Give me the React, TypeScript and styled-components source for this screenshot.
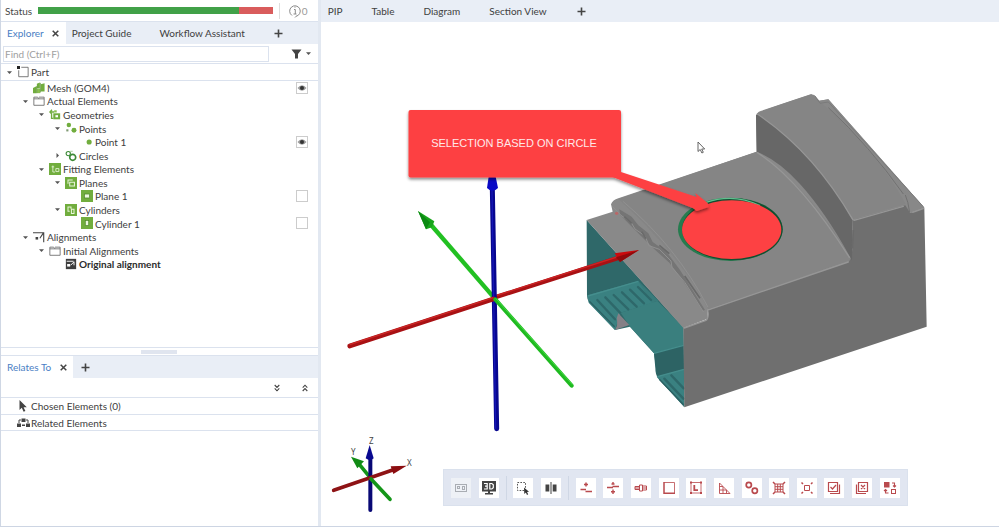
import React from "react";
import styled, { createGlobalStyle } from "styled-components";

const GlobalStyle = createGlobalStyle`
  * { box-sizing: border-box; }
  html, body, #root { height: 100%; }
  body {
    margin: 0;
    background: #ffffff;
    color: #404040;
    font-family: Lato, "Open Sans", sans-serif;
    font-size: 10px;
    line-height: 14px;
  }
  button, input { font: inherit; color: inherit; }
`;

const line = "#dbe2ee";
const strip = "#e9eef6";

const Shell = styled.div`
  display: flex;
  height: 100%;
  min-height: 480px;
  border-bottom: 1px solid #cdd5e3;
`;

const Sidebar = styled.aside`
  flex: 0 0 calc(32% + 1px);
  min-width: 0;
  display: grid;
  grid-template-rows: auto 1fr 34%;
  border-left: 1px solid #cfd7e4;
  border-right: 3px solid #e2e8f1;
`;

const StatusRow = styled.div`
  display: flex;
  align-items: center;
  height: 22px;
  padding: 0 10px 0 4px;
  gap: 6px;
  border-bottom: 1px solid ${line};
`;

const StatusLabel = styled.span`
  color: #484848;
`;

const StatusBar = styled.div`
  flex: 1;
  display: flex;
  height: 7px;
`;

const StatusPart = styled.span<{ $share: number; $tone: string }>`
  flex: ${(p) => p.$share};
  background: ${(p) => p.$tone};
`;

const Messages = styled.span`
  display: flex;
  align-items: center;
  height: 16px;
  padding-left: 8px;
  border-left: 1px solid #dedede;
  color: #9a9a9a;
`;

const Section = styled.section`
  display: flex;
  flex-direction: column;
  min-height: 0;
`;

const TabStrip = styled.div`
  display: flex;
  align-items: stretch;
  height: 22px;
  flex: none;
  background: ${strip};
`;

const Tab = styled.div<{ $active?: boolean; $wide?: boolean }>`
  display: flex;
  align-items: center;
  gap: 6px;
  padding: 0 ${(p) => (p.$wide ? 22 : 4)}px 0 6px;
  background: ${(p) => (p.$active ? "#ffffff" : "transparent")};
`;

const TabButton = styled.button<{ $active?: boolean }>`
  padding: 0;
  border: 0;
  background: none;
  white-space: nowrap;
  color: ${(p) => (p.$active ? "#4a80c4" : "#404040")};
`;

const IconButton = styled.button`
  display: grid;
  place-items: center;
  padding: 0;
  min-width: 12px;
  height: 100%;
  border: 0;
  background: none;
  color: #444444;
`;

const FindRow = styled.div`
  display: flex;
  align-items: center;
  flex: none;
  height: 20px;
  padding: 0 3px 0 2px;
  border-bottom: 1px solid ${line};
`;

const FindInput = styled.input`
  flex: 1;
  min-width: 0;
  height: 16px;
  margin-right: 22px;
  padding: 0 1px;
  border: 1px solid ${line};
  background: #ffffff;
  outline: 0;
  &::placeholder { color: #a0a0a0; opacity: 1; }
`;

const RootRow = styled.div`
  flex: none;
  display: grid;
  height: 17px;
  border-bottom: 1px solid ${line};
`;

const TreeList = styled.div`
  display: grid;
  grid-auto-rows: 1fr;
  height: 190px;
`;

const Row = styled.div<{ $level: number; $bold?: boolean }>`
  display: flex;
  align-items: center;
  min-height: 0;
  padding: 0 10px 0 ${(p) => p.$level * 16 + 2}px;
  font-weight: ${(p) => (p.$bold ? 700 : 400)};
  color: ${(p) => (p.$bold ? "#2c2c2c" : "#404040")};
`;

const Chevron = styled.span`
  display: grid;
  place-items: center;
  flex: none;
  width: 13px;
`;

const RowIcon = styled.span`
  display: grid;
  place-items: center;
  flex: none;
  width: 14px;
`;

const RowText = styled.span`
  flex: 1;
  padding-left: 1px;
  white-space: nowrap;
`;

const Toggle = styled.label`
  display: grid;
  place-items: center;
  width: 12px;
  height: 12px;
  > * { grid-area: 1 / 1; }
`;

const ToggleBox = styled.input`
  appearance: none;
  width: 12px;
  height: 12px;
  margin: 0;
  border: 1px solid #cccccc;
  background: #ffffff;
`;

const Grip = styled.div`
  display: grid;
  place-items: center;
  flex: none;
  height: 9px;
  border: solid ${line};
  border-width: 1px 0;
  &::before {
    content: "";
    width: 36px;
    height: 4px;
    background: #e0e5ef;
  }
`;

const FoldRow = styled.div`
  display: flex;
  justify-content: flex-end;
  gap: 16px;
  flex: none;
  height: 20px;
  padding-right: 7px;
  border-bottom: 1px solid ${line};
`;

const RelationRow = styled.div<{ $tall?: boolean }>`
  display: flex;
  align-items: center;
  flex: none;
  height: ${(p) => (p.$tall ? 17 : 16)}px;
  padding-left: 15px;
  border-bottom: 1px solid ${line};
`;

const Main = styled.main`
  flex: 1;
  min-width: 0;
  display: flex;
  flex-direction: column;
`;

const ViewTabs = styled(TabStrip)`
  gap: 29px;
  padding-left: 7px;
`;

const Viewport = styled.div`
  position: relative;
  flex: 1;
  min-height: 0;
`;

const Scene = styled.svg`
  display: block;
  width: 100%;
  height: 100%;
`;

const Toolbar = styled.div`
  position: absolute;
  left: 18%;
  bottom: 20px;
  display: flex;
  align-items: center;
  justify-content: space-between;
  width: 465px;
  height: 37px;
  padding: 0 7px;
  background: #e1e6f1;
  border: 1px solid #dae1ed;
`;

const ToolGroup = styled.div<{ $width: number }>`
  display: flex;
  justify-content: space-between;
  width: ${(p) => p.$width}px;
`;

const ToolSeparator = styled.span`
  width: 1px;
  height: 24px;
  background: #cfd7e5;
`;

const Tool = styled.button<{ $tone: string }>`
  width: 20px;
  height: 20px;
  padding: 0;
  border: 0;
  background: ${(p) => (p.disabled ? "#eef1f6" : "#ffffff")};
  color: ${(p) => p.$tone};
  svg { display: block; }
`;

const Cross = () => (
  <svg width="7" height="7" viewBox="0 0 7 7" stroke="currentColor" strokeWidth="1.5">
    <path d="M.7.7l5.6 5.6M6.3.7L.7 6.3" />
  </svg>
);
const Plus = () => (
  <svg width="9" height="9" viewBox="0 0 9 9" stroke="currentColor" strokeWidth="1.6">
    <path d="M4.5.5v8M.5 4.5h8" />
  </svg>
);
const Fold = ({ up }: { up?: boolean }) => (
  <svg width="6" height="8" viewBox="0 0 6 8" fill="none" stroke="currentColor" strokeWidth="1.1">
    <path d={up ? "M.7 3.6L3 1.2l2.3 2.4M.7 7L3 4.6 5.3 7" : "M.7 1L3 3.4 5.3 1M.7 4.4L3 6.8l2.3-2.4"} />
  </svg>
);
const Caret = ({ closed }: { closed?: boolean }) => (
  <svg width="5" height="5" viewBox="0 0 5 5" fill="#555">
    <path d={closed ? "M1.5 0L4 2.5 1.5 5z" : "M0 1.2h5L2.5 4z"} />
  </svg>
);
const Eye = () => (
  <svg width="10" height="8" viewBox="0 0 10 8">
    <path d="M.5 4Q5-1.500 9.500 4 5 9.500.5 4z" fill="#9a9a9a" />
    <circle cx="5" cy="4" r="2" fill="#333" />
  </svg>
);

const G = "#71ad3e";
const D = "#444";

const glyphs: Record<string, React.ReactNode> = {
  part: (
    <g fill="none" stroke="#666">
      <path d="M5 1.500h8v11H2V5" />
      <rect x="0" y="0" width="3.500" height="3.500" fill="#222" stroke="none" />
    </g>
  ),
  mesh: (
    <g fill={G}>
      <path d="M0 7l4-2v8H0zM4.500 2l3.500-1.500v7H4.500zM9 2.500l4.500-1V11H9z" />
      <path d="M4.500 8h4v5h-4z" fill="#8cc152" />
      <path d="M4.300 5v8M8.600 1v11" stroke="#4d8527" strokeWidth=".8" />
    </g>
  ),
  folder: (
    <g fill="none" stroke="#6a6a6a">
      <path d="M1 12V2.500h4.500L7 4.500h6V12zM7 2.500h6v2M1 4.500h6" />
    </g>
  ),
  geometries: (
    <g>
      <path d="M1 3.500h5M3.500 1L1 3.500 3.500 6M3 6v5h2" fill="none" stroke={G} strokeWidth="1.600" />
      <rect x="5" y="5" width="8" height="7" fill={G} />
      <rect x="7.500" y="7.200" width="3" height="2.500" fill="#fff" />
      <rect x="6" y="1.500" width="3" height="2.500" fill="#8cc152" />
    </g>
  ),
  points: (
    <g fill={G}>
      <circle cx="4.500" cy="3.500" r="2.600" />
      <circle cx="10.500" cy="9.500" r="2.900" />
      <rect x="1.500" y="8.500" width="2.500" height="2.500" fill="#7f9a73" />
    </g>
  ),
  point: <circle cx="9.500" cy="7" r="3" fill={G} />,
  circles: (
    <g fill="none" stroke="#3c8a36">
      <circle cx="3.800" cy="4.200" r="2.500" strokeWidth="1.300" />
      <circle cx="9" cy="8.600" r="3.500" strokeWidth="1.900" />
      <path d="M6 1.500h3" stroke="#9ac98c" />
    </g>
  ),
  fitting: (
    <g>
      <rect x="0" y="0" width="14" height="14" fill={G} />
      <path d="M3 4.500h3M4.500 3v7.500H7M8 6.500h3.500V10H8z" fill="none" stroke="#e7f5d8" />
    </g>
  ),
  planes: (
    <g>
      <rect x="0" y="0" width="14" height="14" fill={G} />
      <path d="M3.500 8V3.500H9M5.500 6h5.500v4.500H5.500z" fill="none" stroke="#e9f6da" strokeWidth="1.200" />
    </g>
  ),
  plane: (
    <g>
      <rect x="0" y="0" width="14" height="14" fill={G} />
      <rect x="4" y="4.700" width="6" height="4.600" fill="#ecf8df" stroke="#4b8426" strokeWidth=".8" />
    </g>
  ),
  cylinders: (
    <g>
      <rect x="0" y="0" width="14" height="14" fill={G} />
      <path d="M5.500 8.500H3.500V3.500H7v2M7.500 6h3v5h-3z" fill="none" stroke="#e9f6da" strokeWidth="1.200" />
    </g>
  ),
  cylinder: (
    <g>
      <rect x="0" y="0" width="14" height="14" fill={G} />
      <rect x="5" y="4" width="4" height="6" fill="#ecf8df" stroke="#4b8426" strokeWidth=".8" />
    </g>
  ),
  alignments: (
    <g fill="none" stroke={D}>
      <path d="M0 2h12.500v11M8 8.500l4-6" strokeWidth="1.300" />
      <rect x="3" y="7" width="3" height="3" fill={D} stroke="none" />
    </g>
  ),
  original: (
    <g>
      <rect x="1" y="1" width="12" height="12" fill="#3d3d3d" />
      <path d="M2 3.800h8M6.500 8.500l4-4v4" fill="none" stroke="#fff" strokeWidth="1.100" />
      <rect x="2.500" y="7" width="3.500" height="3" fill="#fff" />
    </g>
  ),
};

const Glyph = ({ name }: { name: string }) => (
  <svg width="12" height="12" viewBox="0 0 14 14">{glyphs[name]}</svg>
);

type Node = { text: string; icon: string; level: number; fold?: "open" | "closed"; toggle?: "on" | "off"; bold?: boolean };

const nodes: Node[] = [
  { text: "Mesh (GOM4)", icon: "mesh", level: 1, toggle: "on" },
  { text: "Actual Elements", icon: "folder", level: 1, fold: "open" },
  { text: "Geometries", icon: "geometries", level: 2, fold: "open" },
  { text: "Points", icon: "points", level: 3, fold: "open" },
  { text: "Point 1", icon: "point", level: 4, toggle: "on" },
  { text: "Circles", icon: "circles", level: 3, fold: "closed" },
  { text: "Fitting Elements", icon: "fitting", level: 2, fold: "open" },
  { text: "Planes", icon: "planes", level: 3, fold: "open" },
  { text: "Plane 1", icon: "plane", level: 4, toggle: "off" },
  { text: "Cylinders", icon: "cylinders", level: 3, fold: "open" },
  { text: "Cylinder 1", icon: "cylinder", level: 4, toggle: "off" },
  { text: "Alignments", icon: "alignments", level: 1, fold: "open" },
  { text: "Initial Alignments", icon: "folder", level: 2, fold: "open" },
  { text: "Original alignment", icon: "original", level: 3, bold: true },
];

const TreeRow = ({ node }: { node: Node }) => (
  <Row $level={node.level} $bold={node.bold} role="treeitem" aria-level={node.level + 1}>
    <Chevron>{node.fold && <Caret closed={node.fold === "closed"} />}</Chevron>
    <RowIcon><Glyph name={node.icon} /></RowIcon>
    <RowText>{node.text}</RowText>
    {node.toggle && (
      <Toggle>
        <ToggleBox type="checkbox" aria-label={`Show ${node.text}`} defaultChecked={node.toggle === "on"} />
        {node.toggle === "on" && <Eye />}
      </Toggle>
    )}
  </Row>
);

type ToolDef = { name: string; art: React.ReactNode; disabled?: boolean; dark?: boolean };

const viewTools: ToolDef[] = [
  {
    name: "Report page", disabled: true,
    art: <g fill="none" stroke="#a9adb3"><rect x="4.500" y="6.500" width="11" height="7" /><rect x="6.500" y="8.500" width="2" height="2" /><rect x="11.500" y="8.500" width="2" height="3" /></g>,
  },
  {
    name: "3D view", dark: true,
    art: (
      <g>
        <path d="M3 3h14v10.500H3zM9 13.500h2V15h3v1.500H6V15h3z" fill="#444" />
        <path d="M5 5.500h3.200v5.500H5M6 8.200h2M10.800 5.500v5.500h2l1.500-1.300V6.800l-1.500-1.300z" fill="none" stroke="#fff" strokeWidth="1.200" />
      </g>
    ),
  },
];
const selectTools: ToolDef[] = [
  {
    name: "Select area", dark: true,
    art: <g><rect x="4.500" y="4.500" width="8" height="8" fill="none" stroke="#555" strokeDasharray="1.600 1.300" /><path d="M11 9.500l5 4.300-2 .2 1.200 2.300-1.200.6-1.100-2.300-1.600 1.400z" fill="#333" /></g>,
  },
  {
    name: "Mirror selection", dark: true,
    art: <g fill="#444"><path d="M4.500 6.500h3.800v7H4.500zM11.700 6.500h3.800v7h-3.800z" /><path d="M9.500 4h1v12h-1z" /></g>,
  },
];
const meshTools: ToolDef[] = [
  { name: "Select above", art: <g><path d="M4.500 11.500H10M9.500 13.500H16" strokeWidth="1.500" /><path d="M10 4.500v4M8 6.500h4" strokeWidth="1.500" /></g> },
  { name: "Select between", art: <g><path d="M4 9.500h6M9.500 8.500H16" strokeWidth="1.500" /><path d="M10 4v2.500M8.500 6h3M10 11.500v4.500M8 13.700h4" strokeWidth="1.400" /></g> },
  { name: "Select patch", art: <path d="M4 8.500h4.500v3H4zM8.500 7h3v6h-3zM11.500 8h4v4h-4zM4 10h5M11 10h5" /> },
  { name: "Select rectangle", art: <g><path d="M5 4.500h10.500v11" strokeWidth=".8" /><path d="M5 4v11.300h11" strokeWidth="1.500" /></g> },
  { name: "Select corner", art: <g><rect x="5" y="4.500" width="10" height="10.500" strokeWidth=".8" /><path d="M8.300 7v5.200H12" strokeWidth="1.800" /><path d="M4 4.500h2M14 4.500h2M4 15h2M14 15h2" strokeWidth="2" /></g> },
  { name: "Select triangles", art: <path d="M5.500 5v10.500H16zM5.500 12h7M9 9v6.500M5.500 8.500H9M12.500 12v3.500" strokeWidth=".9" /> },
  { name: "Select holes", art: <g strokeWidth="1.700"><circle cx="6.800" cy="7" r="2.600" /><circle cx="12.800" cy="12.800" r="2.600" /></g> },
  { name: "Select all", art: <g><path d="M6 6h8v8H6zM8.700 6v8M11.300 6v8M6 8.700h8M6 11.300h8" /><path d="M4 4l2 2M16 4l-2 2M4 16l2-2M16 16l-2-2" strokeWidth="1.500" /></g> },
  { name: "Shrink selection", art: <g><path d="M7.500 7.500h5v5h-5z" /><path d="M4.500 4.500l1.500 1.500M15.500 4.500L14 6M4.500 15.500L6 14M15.500 15.500L14 14" strokeWidth="1.500" /></g> },
  { name: "Confirm selection", art: <path d="M4.500 4.500h9v9h-9zM6 15.500h9.500V6.500M6.500 9l2 2 3.500-4" strokeWidth="1.200" /> },
  { name: "Discard selection", art: <path d="M6.500 4.500h9v9h-9zM4.500 6.500v9H14M9 7l4 4M13 7l-4 4" strokeWidth="1.200" /> },
  { name: "Invert selection", art: <g><rect x="4" y="4" width="5.500" height="5.500" fill="currentColor" stroke="none" /><rect x="11.500" y="11.500" width="4" height="4" /><path d="M12 5h2.500v4M13 7.500L14.500 9 16 7.500M8.500 15H5.500v-3.500M4 13l1.500-1.500L7 13" strokeWidth="1.100" /></g> },
];

const tools = (list: ToolDef[]) =>
  list.map((t) => (
    <Tool key={t.name} $tone="#b94a4e" aria-label={t.name} disabled={t.disabled}>
      <svg width="20" height="20" viewBox="0 0 20 20" fill="none" stroke={t.dark || t.disabled ? "none" : "currentColor"}>
        {t.art}
      </svg>
    </Tool>
  ));

const Solid = () => (
  <g transform="translate(570 80) scale(.33333)">
    <path fill="#2f6869" d="M50 420L340 742 343 982 265 895Q256 885 256 865L252 820 180 740 135 750 58 668Q51 660 51 645z" />
    <path fill="#3a8181" d="M52 646L205 603 250 668 152 698 135 750 56 668z" />
    <path fill="#3a7f7e" d="M152 698L262 662 340 742 341 795 252 820 180 740z" />
    <path fill="#2d6364" d="M252 820L341 797 342 868 262 890z" />
    <path fill="#3a8181" d="M260 890L342 868 343 980 268 900z" />
    <path fill="#397b7b" d="M205 603L265 662 245 668z" />
    <path fill="none" stroke="#2e686a" strokeWidth="7" strokeLinecap="round" d="M82 660L135 718M106 652L150 698M131 645L175 688M156 637L200 680M180 629L222 670M204 621L243 660M283 896L340 956M304 886L341 925" />
    <path fill="none" stroke="#2b6163" strokeWidth="4" d="M58 664L134 740M268 898L341 974" />
    <path fill="none" stroke="#458e8d" strokeWidth="4" d="M54 648L205 604M252 820L341 796M262 890L342 868" />
    <path fill="#858086" d="M145 700L178 735 135 750Q145 735 140 715z" />
    <path fill="#898989" d="M50 420L128 395 123 373Q128 360 145 355L560 215 558 108Q560 97 572 93L722 43 733 45 748 62 775 58 1063 383 1020 398 848 420 845 542 413 690 413 716 340 744z" />
    <path fill="#858585" d="M145 357L560 215Q740 345 843 541L415 688Q330 525 145 357z" />
    <path fill="#6f6f6f" d="M340 744L408 720Q418 714 413 688L832 547Q846 540 846 520L848 420 1006 376 1020 398 1063 383 1070 740 343 982z" />
    <path fill="#676767" d="M558 105Q572 100 590 118 720 230 790 322L848 420 846 542Q770 400 690 312 625 240 560 215z" />
    <path fill="#858585" d="M562 101Q568 94 725 43L748 62Q930 225 1007 372L848 418Q735 220 562 101z" />
    <path fill="#888888" d="M748 62L775 58 1063 383 1020 398Q1010 355 1000 340 900 190 748 62z" />
    <path fill="none" stroke="#717171" strokeWidth="3" d="M775 83Q900 200 1000 342M1006 345Q1015 365 1019 398" />
    <path fill="none" stroke="#7a7a7a" strokeWidth="3" d="M735 48L750 70 775 66 1060 380" />
    <path fill="none" stroke="#969696" strokeWidth="4" strokeLinecap="round" d="M343 744L408 721Q417 715 413 690L835 546M852 421L1000 379M1028 397L1060 386M562 102Q730 215 848 418M562 218Q690 300 838 532" />
    <path fill="#757575" d="M148 388L185 410 205 436 235 460 248 486 290 516 330 570 405 690 398 692 340 604 298 548 250 505 210 465 150 404z" />
    <path fill="none" stroke="#919191" strokeWidth="3" strokeLinecap="round" d="M128 380L152 405 185 430 195 447 225 468 237 497 268 508 303 543 306 562 345 608 400 695M160 365Q320 500 413 680" />
    <path fill="none" stroke="#6a6a6a" strokeWidth="5" d="M163 410L185 430M215 455L228 476M268 496L298 521M344 588L390 655M850 450L847 505" />
    <circle cx="140" cy="400" r="5" fill="#b86868" />
  </g>
);

const Annotation = () => (
  <g>
    <g transform="translate(570 80) scale(.33333)">
      <ellipse cx="481" cy="448" rx="157" ry="95" fill="#267c4f" />
      <ellipse cx="487" cy="448" rx="151" ry="93" fill="#124e31" />
      <path d="M405 368Q490 338 570 377" fill="none" stroke="#5fbe8d" strokeWidth="4" />
      <ellipse cx="485" cy="449" rx="149" ry="88" fill="#fd4143" />
    </g>
    <g fill="#fd4143" filter="url(#drop)">
      <rect x="408.500" y="110" width="212.500" height="67.500" rx="2" />
      <path d="M610 176l11-4 75.700 25-1.500-4 12.500 10 1 4-12 4-4-3z" />
    </g>
    <text x="514" y="147" textAnchor="middle" fill="#ffe9e9" fontFamily="Liberation Sans, sans-serif" fontSize="11">
      SELECTION BASED ON CIRCLE
    </text>
  </g>
);

const SceneView = () => (
  <Scene viewBox="321 22 678 504" preserveAspectRatio="xMinYMin meet" role="img" aria-label="3D view of the scanned part">
    <defs>
      <filter id="drop" x="-10%" y="-20%" width="120%" height="150%">
        <feDropShadow dx="0" dy="2" stdDeviation="1.500" floodColor="#000" floodOpacity=".45" />
      </filter>
    </defs>
    <Solid />
    <g transform="translate(340 160) scale(.33333)">
      <path d="M263 183L462 413" stroke="#22c022" strokeWidth="13" />
      <path d="M234 153L283 184 276 202 258 208z" fill="#18a51b" />
      <path d="M234 153L270 187 258 208z" fill="#0b8a12" />
      <path d="M462 413L840 292" stroke="#a81114" strokeWidth="13" />
      <path d="M462 409L840 288" stroke="#cc2324" strokeWidth="4" />
      <path d="M897 270L824 280 840 306z" fill="#ca0b0e" />
      <path d="M897 270L828 292 840 306z" fill="#900a0c" />
      <path d="M457 85L470 806" stroke="#07078f" strokeWidth="15" strokeLinecap="round" />
      <path d="M456 90L467 806" stroke="#1515b5" strokeWidth="4" />
      <path d="M446 50H467L474 84Q458 101 441 84z" fill="#0909c6" />
      <path d="M29 558L460 417" stroke="#a81114" strokeWidth="14" strokeLinecap="round" />
      <path d="M29 554L460 413" stroke="#cd2726" strokeWidth="4" />
      <path d="M466 418L695 677" stroke="#1fba20" strokeWidth="12" strokeLinecap="round" />
      <path d="M468 416L697 674" stroke="#40d840" strokeWidth="3" />
    </g>
    <g transform="translate(340 430) scale(.33333)" strokeLinecap="round">
      <path d="M58 103L90 142" stroke="#149618" strokeWidth="11" />
      <path d="M33 80L72 94 52 115z" fill="#118b15" />
      <path d="M91 85V240" stroke="#080875" strokeWidth="12" />
      <path d="M89 45L101 85Q90 96 77 85z" fill="#090990" />
      <path d="M-19 181L158 120" stroke="#8e1315" strokeWidth="11" />
      <path d="M200 107L152 109 160 132z" fill="#8c0d10" />
      <path d="M93 147L150 208" stroke="#149618" strokeWidth="11" />
    </g>
    <g fill="#444" fontFamily="Noto Sans, sans-serif" fontSize="8">
      <text x="369" y="444">Z</text>
      <text x="351" y="455">Y</text>
      <text x="407" y="466">X</text>
    </g>
    <Annotation />
    <path d="M698 142v9.500l2.200-2 1.700 3.500 1.400-.7-1.600-3.300h3z" fill="#fff" stroke="#555" strokeWidth=".9" />
  </Scene>
);

export default function App() {
  return (
    <>
      <GlobalStyle />
      <Shell>
        <Sidebar>
          <StatusRow>
            <StatusLabel>Status</StatusLabel>
            <StatusBar role="img" aria-label="Status">
              <StatusPart $share={6} $tone="#41a148" />
              <StatusPart $share={1} $tone="#d95c5c" />
            </StatusBar>
            <Messages>
              <svg width="14" height="14" viewBox="0 0 14 14" fill="none" stroke="#8a8a8a">
                <path d="M4 11.500A5.300 5.300 0 1 1 8 12.300L7 13.500M6 5.500h1.300v4.500M5.500 10h3M6.500 3.200h1" />
              </svg>
              0
            </Messages>
          </StatusRow>
          <Section>
            <TabStrip role="tablist">
              <Tab $active>
                <TabButton $active role="tab" aria-selected>Explorer</TabButton>
                <IconButton aria-label="Close Explorer"><Cross /></IconButton>
              </Tab>
              <Tab $wide><TabButton role="tab">Project Guide</TabButton></Tab>
              <Tab $wide><TabButton role="tab">Workflow Assistant</TabButton></Tab>
              <Tab><IconButton aria-label="Add tab"><Plus /></IconButton></Tab>
            </TabStrip>
            <FindRow>
              <FindInput aria-label="Find" placeholder="Find (Ctrl+F)" />
              <IconButton aria-label="Filter">
                <svg width="11" height="10" viewBox="0 0 11 10" fill="#444"><path d="M.5.5h10L7 5v4.500H4V5z" /></svg>
              </IconButton>
              <IconButton aria-label="Filter options"><Caret /></IconButton>
            </FindRow>
            <RootRow>
              <TreeRow node={{ text: "Part", icon: "part", level: 0, fold: "open" }} />
            </RootRow>
            <TreeList role="tree">
              {nodes.map((n) => <TreeRow key={n.text} node={n} />)}
            </TreeList>
          </Section>
          <Section>
            <Grip />
            <TabStrip role="tablist">
              <Tab $active>
                <TabButton $active role="tab" aria-selected>Relates To</TabButton>
                <IconButton aria-label="Close Relates To"><Cross /></IconButton>
              </Tab>
              <Tab><IconButton aria-label="Add tab"><Plus /></IconButton></Tab>
            </TabStrip>
            <FoldRow>
              <IconButton aria-label="Expand all"><Fold /></IconButton>
              <IconButton aria-label="Collapse all"><Fold up /></IconButton>
            </FoldRow>
            <RelationRow $tall>
              <RowIcon>
                <svg width="10" height="12" viewBox="0 0 10 12" fill="#444"><path d="M1.500 0v10l2.300-2.200 1.800 4 1.800-.8-1.800-3.800h3.200z" /></svg>
              </RowIcon>
              <RowText>Chosen Elements (0)</RowText>
            </RelationRow>
            <RelationRow>
              <RowIcon>
                <svg width="13" height="10" viewBox="0 0 13 10" fill="#444">
                  <path d="M4.500.5h4v3.500h-4zM0 5.500h4V9H0zM9 5.500h4V9H9zM5 6.500h3V8H5z" />
                  <path d="M4 2H2v3M9 2h2v3" fill="none" stroke="#444" />
                </svg>
              </RowIcon>
              <RowText>Related Elements</RowText>
            </RelationRow>
          </Section>
        </Sidebar>
        <Main>
          <ViewTabs role="tablist">
            {["PIP", "Table", "Diagram", "Section View"].map((t) => (
              <TabButton key={t} role="tab">{t}</TabButton>
            ))}
            <IconButton aria-label="Add view"><Plus /></IconButton>
          </ViewTabs>
          <Viewport>
            <SceneView />
            <Toolbar role="toolbar" aria-label="Selection tools">
              <ToolGroup $width={48}>{tools(viewTools)}</ToolGroup>
              <ToolSeparator />
              <ToolGroup $width={48}>{tools(selectTools)}</ToolGroup>
              <ToolSeparator />
              <ToolGroup $width={324}>{tools(meshTools)}</ToolGroup>
            </Toolbar>
          </Viewport>
        </Main>
      </Shell>
    </>
  );
}
